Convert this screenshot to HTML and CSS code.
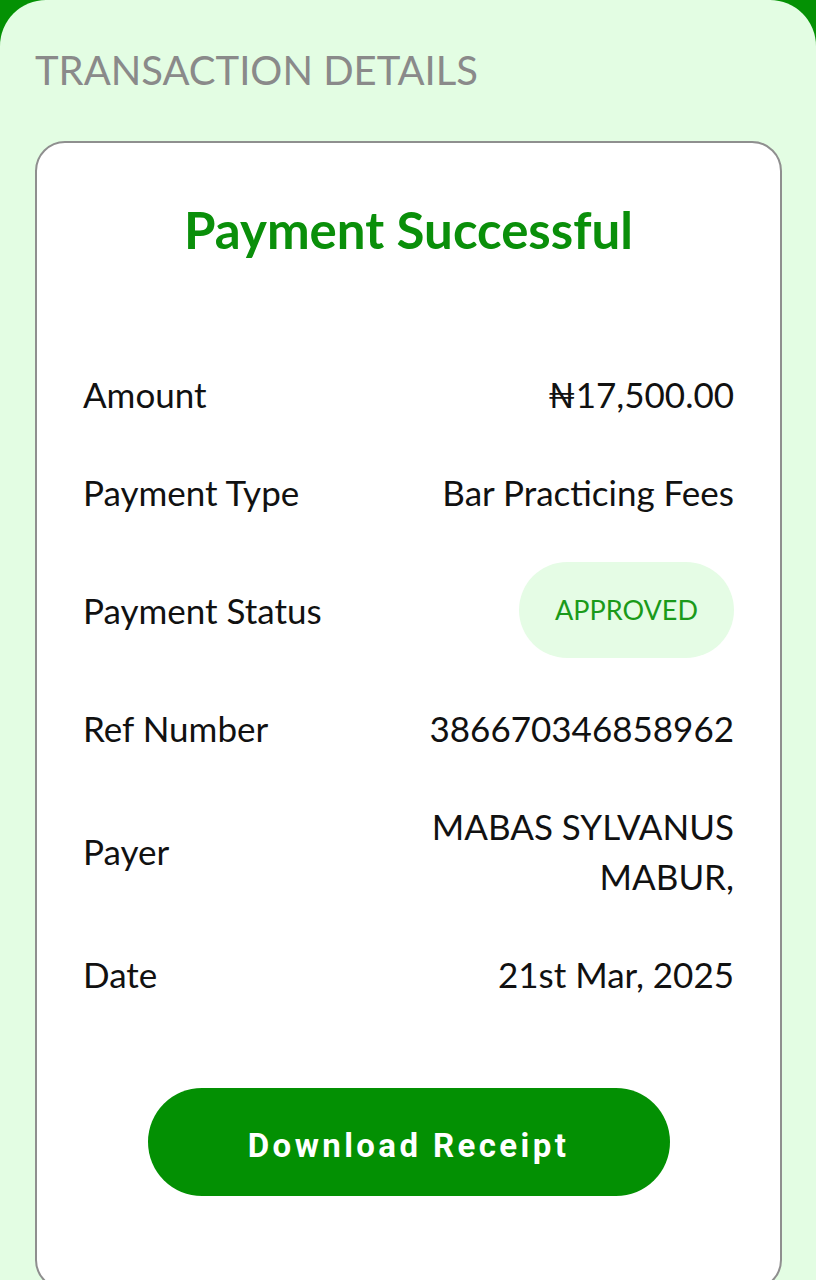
FILE: index.html
```html
<!DOCTYPE html>
<html lang="en">
<head>
    <meta charset="UTF-8">
    <meta name="viewport" content="width=device-width, initial-scale=1.0">
    <title>Transaction Details</title>
    <link rel="stylesheet" href="styles.css">
</head>
<body>
    <div class="screen">
        <div class="panel">
            <h1 class="section-title">TRANSACTION DETAILS</h1>

            <div class="card">
                <h2 class="card-title">Payment Successful</h2>

                <div class="rows">
                    <div class="row">
                        <span class="label">Amount</span>
                        <span class="value">₦17,500.00</span>
                    </div>
                    <div class="row">
                        <span class="label">Payment Type</span>
                        <span class="value">Bar Practicing Fees</span>
                    </div>
                    <div class="row row-status">
                        <span class="label">Payment Status</span>
                        <span class="status">APPROVED</span>
                    </div>
                    <div class="row">
                        <span class="label">Ref Number</span>
                        <span class="value">386670346858962</span>
                    </div>
                    <div class="row">
                        <span class="label">Payer</span>
                        <span class="value">MABAS SYLVANUS<br>MABUR,</span>
                    </div>
                    <div class="row">
                        <span class="label">Date</span>
                        <span class="value">21st Mar, 2025</span>
                    </div>
                </div>

                <button class="download">Download Receipt</button>
            </div>
        </div>
    </div>
</body>
</html>
```

FILE: styles.css
```css
body {
    margin: 0;
    font-family: Lato, "Noto Sans", "DejaVu Sans", sans-serif;
    color: #111;
    overflow: hidden;
}

.screen {
    background-color: #049104;
    height: 1280px;
}

.panel {
    background-color: #e3fde3;
    height: 100%;
    border-radius: 46px 46px 0 0;
    padding: 0 34px 0 35px;
    box-sizing: border-box;
    overflow: hidden;
}

.section-title {
    margin: 0;
    padding-top: 44px;
    font-size: 40px;
    font-weight: 400;
    line-height: 52px;
    color: #8a8a8a;
    height: 97px;
}

.card {
    background-color: #fff;
    border: 2px solid #8f8f8f;
    border-radius: 30px;
    padding: 57px 46px 92px;
    display: flex;
    flex-direction: column;
    align-items: center;
}

.card-title {
    margin: 0;
    font-size: 51px;
    font-weight: 700;
    line-height: 60px;
    color: #0a8f0a;
}

.rows {
    align-self: stretch;
    display: flex;
    flex-direction: column;
    gap: 48px;
    margin-top: 109px;
}

.row {
    display: flex;
    justify-content: space-between;
    align-items: center;
    font-size: 35px;
    line-height: 50px;
}

.row-status {
    margin: -3px 0;
}

.value {
    text-align: right;
}

.status {
    background-color: #e5fce5;
    color: #1a9a1a;
    font-size: 27px;
    line-height: 96px;
    padding: 0 36px;
    border-radius: 48px;
}

.download {
    margin-top: 89px;
    width: 522px;
    height: 108px;
    border: none;
    border-radius: 54px;
    background-color: #039003;
    color: #fff;
    font-family: Roboto, sans-serif;
    font-size: 33px;
    font-weight: 700;
    letter-spacing: 3.4px;
    padding: 6px 0 0;
    cursor: pointer;
}
```
